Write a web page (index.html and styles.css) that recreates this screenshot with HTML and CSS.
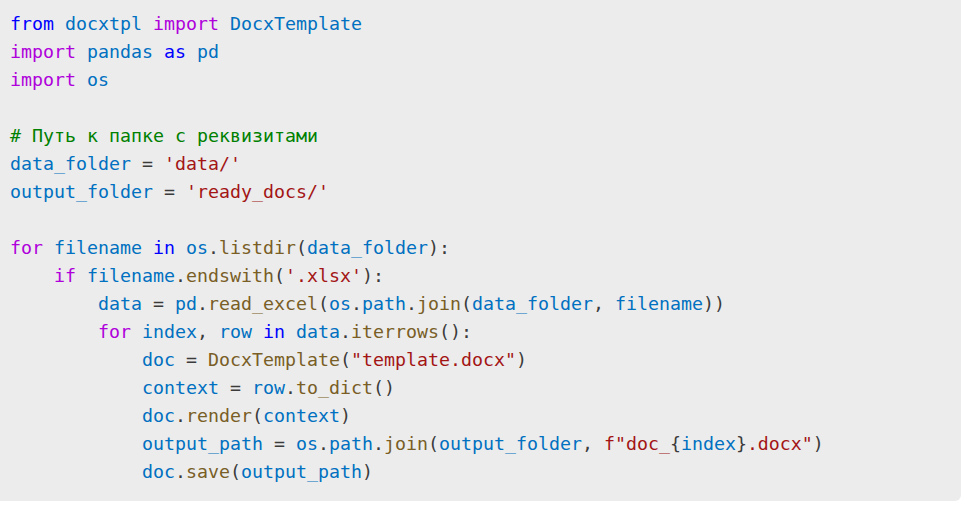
FILE: index.html
```html
<!DOCTYPE html>
<html lang="ru">
<head>
<meta charset="utf-8">
<link rel="stylesheet" href="styles.css">
</head>
<body>
<pre class="code"><code><span class="k">from</span> <span class="v">docxtpl</span> <span class="c">import</span> <span class="v">DocxTemplate</span>
<span class="c">import</span> <span class="v">pandas</span> <span class="k">as</span> <span class="v">pd</span>
<span class="c">import</span> <span class="v">os</span>

<span class="cm"># Путь к папке с реквизитами</span>
<span class="v">data_folder</span> = <span class="s">'data/'</span>
<span class="v">output_folder</span> = <span class="s">'ready_docs/'</span>

<span class="c">for</span> <span class="v">filename</span> <span class="k">in</span> <span class="v">os</span>.<span class="f">listdir</span>(<span class="v">data_folder</span>):
    <span class="c">if</span> <span class="v">filename</span>.<span class="f">endswith</span>(<span class="s">'.xlsx'</span>):
        <span class="v">data</span> = <span class="v">pd</span>.<span class="f">read_excel</span>(<span class="v">os</span>.<span class="v">path</span>.<span class="f">join</span>(<span class="v">data_folder</span>, <span class="v">filename</span>))
        <span class="c">for</span> <span class="v">index</span>, <span class="v">row</span> <span class="k">in</span> <span class="v">data</span>.<span class="f">iterrows</span>():
            <span class="v">doc</span> = <span class="f">DocxTemplate</span>(<span class="s">"template.docx"</span>)
            <span class="v">context</span> = <span class="v">row</span>.<span class="f">to_dict</span>()
            <span class="v">doc</span>.<span class="f">render</span>(<span class="v">context</span>)
            <span class="v">output_path</span> = <span class="v">os</span>.<span class="v">path</span>.<span class="f">join</span>(<span class="v">output_folder</span>, <span class="s">f"doc_</span>{<span class="v">index</span>}<span class="s">.docx"</span>)
            <span class="v">doc</span>.<span class="f">save</span>(<span class="v">output_path</span>)</code></pre>
</body>
</html>
```

FILE: styles.css
```css
html, body {
  margin: 0;
  padding: 0;
  background: #ffffff;
}

.code {
  margin: 0;
  width: 961px;
  height: 501px;
  box-sizing: border-box;
  padding: 10px 0 0 10px;
  background: #ececec;
  border-bottom-right-radius: 6px;
  font-family: "DejaVu Sans Mono", "Liberation Mono", monospace;
  font-size: 18.27px;
  line-height: 28px;
  color: #3b3b3b;
  white-space: pre;
  overflow: hidden;
}

.code code {
  font: inherit;
}

.k { color: #0000ff; }
.c { color: #af00db; }
.v { color: #0070c1; }
.f { color: #795e26; }
.s { color: #a31515; }
.cm { color: #008000; }
```
